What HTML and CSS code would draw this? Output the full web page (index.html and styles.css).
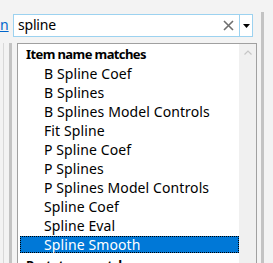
FILE: index.html
```html
<!DOCTYPE html>
<html lang="en">
<head>
    <meta charset="UTF-8">
    <meta name="viewport" content="width=device-width, initial-scale=1.0">
    <title>Search</title>
    <link rel="stylesheet" href="styles.css">
</head>
<body>

<div class="window">
    <div class="main">
        <div class="toolbar">
            <a class="scope-link" href="#">n</a>
            <div class="search">
                <span class="search-text">spline</span>
                <span class="clear">
                    <svg width="11" height="11" viewBox="0 0 11 11"><path d="M1 1 L10 10 M10 1 L1 10" stroke="#6f6f6f" stroke-width="1.6" fill="none"/></svg>
                </span>
                <span class="drop">
                    <svg width="7" height="4" viewBox="0 0 7 4"><path d="M0 0 H7 L3.5 4 Z" fill="#000"/></svg>
                </span>
            </div>
        </div>
        <div class="content">
            <div class="gutter"><span class="g-line"></span><span class="g-bar"></span></div>
            <div class="results">
                <div class="results-list">
                    <div class="group">Item name matches</div>
                    <div class="item">B Spline Coef</div>
                    <div class="item">B Splines</div>
                    <div class="item">B Splines Model Controls</div>
                    <div class="item">Fit Spline</div>
                    <div class="item">P Spline Coef</div>
                    <div class="item">P Splines</div>
                    <div class="item">P Splines Model Controls</div>
                    <div class="item">Spline Coef</div>
                    <div class="item">Spline Eval</div>
                    <div class="item selected">Spline Smooth</div>
                    <div class="group">Prototype matches</div>
                </div>
                <div class="vscroll">
                    <span class="vscroll-up">
                        <svg width="8" height="5" viewBox="0 0 8 5"><path d="M0.5 4.5 L4 1 L7.5 4.5" stroke="#c6c6c6" stroke-width="1.2" fill="none"/></svg>
                    </span>
                </div>
            </div>
        </div>
    </div>
    <div class="splitter"></div>
</div>

</body>
</html>
```

FILE: styles.css
```css
body { margin: 0; background: #f3f3f3; font-family: "Noto Sans", "Open Sans", sans-serif; font-size: 14px; color: #000; }
.window { display: flex; height: 263px; overflow: hidden; }
.main { width: 257px; display: flex; flex-direction: column; }
.splitter { width: 3px; margin: 12px 0 0 4px; background: #c3c3c3; }

.toolbar { height: 43px; display: flex; flex-shrink: 0; }
.scope-link { width: 13px; padding-top: 15px; color: #0066cc; text-decoration: underline; line-height: 19px; overflow: hidden; }
.search { box-sizing: border-box; width: 240px; height: 23px; margin-top: 14px; display: flex; background: #fff; border: 1px solid #9cd2f0; }
.search-text { flex: 1; padding-left: 4px; line-height: 20px; letter-spacing: -0.2px; }
.clear { width: 22px; display: flex; align-items: center; justify-content: center; }
.drop { width: 12px; border-left: 1px solid #9cd2f0; display: flex; align-items: center; justify-content: center; }

.content { flex: 1; display: flex; }
.gutter { width: 17px; display: flex; flex-shrink: 0; }
.g-line { width: 1px; margin-left: 3px; background: #d8d8d8; }
.g-bar { width: 3px; margin-left: 5px; background: #c3c3c3; }

.results { box-sizing: border-box; width: 240px; display: flex; background: #fff; border: 1px solid #a0a0a0; border-bottom: none; }
.results-list { flex: 1; display: flex; flex-direction: column; gap: 2px; overflow: hidden; }
.group { height: 19px; line-height: 20px; padding-left: 8px; font-size: 13px; font-weight: bold; letter-spacing: -0.6px; flex-shrink: 0; }
.item { box-sizing: border-box; height: 17px; line-height: 16px; margin-left: 2px; padding-left: 23px; border: 1px solid transparent; letter-spacing: 0.1px; flex-shrink: 0; }
.item.selected { background: #0078d7; color: #fff; border: 1px dotted #000; }

.vscroll { width: 17px; background: #f0f0f0; }
.vscroll-up { height: 17px; display: flex; align-items: center; justify-content: center; }
```
